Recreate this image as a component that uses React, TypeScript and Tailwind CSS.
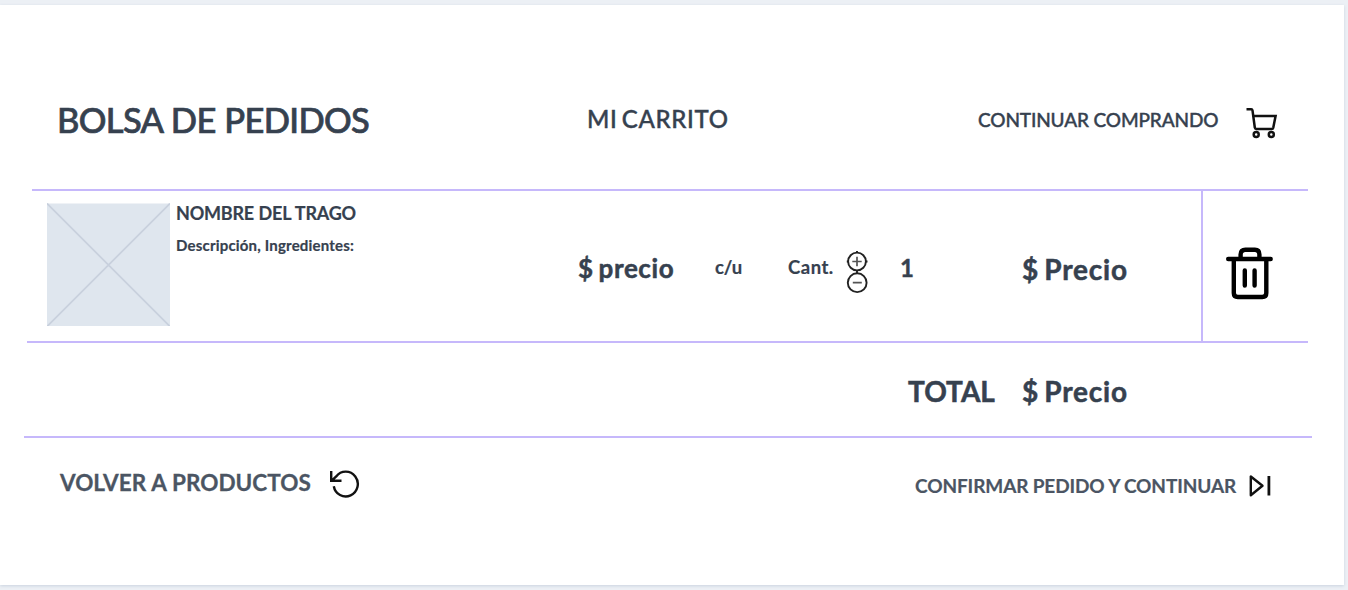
import type { ReactNode } from "react";

function CartIcon() {
  return (
    <svg className="block h-8 w-8 shrink-0" viewBox="0 0 32 32" fill="none" stroke="#111" strokeWidth="2.5">
      <path d="M0.5 2.3H5.2Q6.3 2.3 6.5 3.4L8.8 20.5Q9 21.9 10.3 21.9H25.6Q27 21.9 27.3 20.6L29.6 8.9H7.3" />
      <circle cx="10.2" cy="27.5" r="2.5" />
      <circle cx="25.3" cy="27.5" r="2.5" />
    </svg>
  );
}

function TrashIcon() {
  return (
    <svg className="block h-[54px] w-12 shrink-0" viewBox="0 0 48 54" fill="none" stroke="#000" strokeWidth="4.4" strokeLinecap="round" strokeLinejoin="round">
      <path d="M3.2 13H45.7M15.6 12V8.5Q15.6 3.7 20.4 3.7H29.9Q34.4 3.7 34.4 8.5V12" />
      <path d="M8.8 14V47Q8.8 51 12.8 51H37.3Q41.3 51 41.3 47V14M19.8 24.5V39.5M29.6 24.5V39.5" />
    </svg>
  );
}

function StepperIcons() {
  return (
    <svg className="block h-[44px] w-[22px] shrink-0" viewBox="0 0 22 44" fill="none" stroke="#222" strokeWidth="1.9">
      <circle cx="11" cy="11.5" r="8.9" />
      <circle cx="11.2" cy="32.7" r="9.4" />
      <path d="M6.3 11.5H15.7M11 6.8V16.2M6.8 32.7H15.8" stroke="#555" strokeWidth="1.7" />
      <path d="M11 1V3M11 20V23M0.8 11.5H2.5M19.5 11.5H21.5" />
    </svg>
  );
}

function BackIcon() {
  return (
    <svg className="block h-[30px] w-[30px] shrink-0" viewBox="0 0 30 30" fill="none" stroke="#111" strokeWidth="2.4">
      <path d="M3.8 17.2A12.1 12.4 0 1 0 6.2 7.4L2 11.4M1.2 2V11.8H11.5" />
    </svg>
  );
}

function NextIcon() {
  return (
    <svg className="block h-6 w-6 shrink-0" viewBox="0 0 24 24" fill="none" stroke="#111" strokeLinejoin="round">
      <path d="M2.8 2.5V21.2L14.5 11.8Z" strokeWidth="2.4" />
      <path d="M20.9 2V21.5" strokeWidth="2.8" />
    </svg>
  );
}

function Placeholder() {
  return (
    <svg className="mt-[12px] ml-[15px] block h-[123px] w-[123px] shrink-0" viewBox="0 0 123 123" stroke="#c8d0dd" strokeWidth="1.8">
      <rect y="0.5" width="123" height="123" fill="#dfe6ee" stroke="none" />
      <path d="M0 0.5L123 123.5M123 0.5L0 123.5" />
    </svg>
  );
}

function Label({ className, children }: { className: string; children: ReactNode }) {
  return <span className={`block shrink-0 whitespace-nowrap leading-none ${className}`}>{children}</span>;
}

export default function App() {
  return (
    <div className="h-[590px] w-[1348px] overflow-hidden bg-[#ecf0f5] pt-[5px] font-['Lato',sans-serif] text-[#36414f]">
      <main className="flex h-[580px] w-[1344px] flex-col bg-white shadow-[0_1px_3px_#cbd3df]">
        <header className="flex h-[184px] shrink-0 items-start pl-[57px]">
          <Label className="mt-[98px] w-[530px] text-[34.5px] font-medium tracking-[-0.65px] [word-spacing:0.5px] [-webkit-text-stroke:0.7px_#36414f]">BOLSA DE PEDIDOS</Label>
          <Label className="mt-[102px] w-[391px] text-[24px] font-medium tracking-[0.65px] [word-spacing:-2.4px] [-webkit-text-stroke:0.4px_#36414f]">MI CARRITO</Label>
          <Label className="mt-[105px] w-[267px] text-[19px] font-medium tracking-[-0.13px] [word-spacing:0px] [-webkit-text-stroke:0.4px_#36414f]">CONTINUAR COMPRANDO</Label>
          <div className="mt-[102px] pl-[0.5px]"><CartIcon /></div>
        </header>

        <div className="ml-8 h-[2px] w-[1276px] shrink-0 bg-[#c6b8fb]" />
        <section className="ml-8 flex h-[150px] w-[1276px] shrink-0 items-start">
          <Placeholder />
          <div className="ml-[6px] flex w-[402px] flex-col">
            <Label className="mt-[13px] text-[18px] font-bold tracking-[-0.2px] [word-spacing:0.4px] [-webkit-text-stroke:0.2px_#36414f]">NOMBRE DEL TRAGO</Label>
            <Label className="mt-[16px] text-[15px] font-bold tracking-[0.19px] [-webkit-text-stroke:0.2px_#36414f]">Descripción, Ingredientes:</Label>
          </div>
          <Label className="mt-[64px] w-[137px] text-[26px] font-bold tracking-[0.6px] [word-spacing:-2px] [-webkit-text-stroke:0.5px_#36414f]">$ precio</Label>
          <Label className="mt-[67px] w-[73px] text-[18.5px] font-bold tracking-[-0.2px] [-webkit-text-stroke:0.2px_#36414f]">c/u</Label>
          <Label className="mt-[67px] w-[58px] text-[18.5px] font-bold tracking-[0.5px] [-webkit-text-stroke:0.2px_#36414f]">Cant.</Label>
          <div className="mt-[59px] w-[54px]"><StepperIcons /></div>
          <Label className="mt-[65px] w-[122px] text-[24px] font-bold [-webkit-text-stroke:0.4px_#36414f]">1</Label>
          <Label className="mt-[64px] w-[179px] text-[28px] font-bold tracking-[0.8px] [word-spacing:-2.4px] [-webkit-text-stroke:0.5px_#36414f]">$ Precio</Label>
          <div className="h-full w-[107px] border-l-2 border-[#c6b8fb] pt-[55px] pl-[22px]"><TrashIcon /></div>
        </section>

        <div className="ml-[27px] h-[2px] w-[1281px] shrink-0 bg-[#c6b8fb]" />
        <section className="flex h-[93px] shrink-0 items-start pl-[908px]">
          <Label className="mt-[34px] w-[114px] text-[28px] font-bold [-webkit-text-stroke:0.5px_#36414f]">TOTAL</Label>
          <Label className="mt-[34px] text-[28px] font-bold tracking-[0.8px] [word-spacing:-2.4px] [-webkit-text-stroke:0.5px_#36414f]">$ Precio</Label>
        </section>

        <div className="ml-6 h-[2px] w-[1288px] shrink-0 bg-[#c6b8fb]" />
        <footer className="flex items-start pl-[60px] text-[#4b5563]">
          <Label className="mt-[34px] w-[269.5px] text-[22.5px] font-bold tracking-[0.03px] [word-spacing:0.3px] [-webkit-text-stroke:0.3px_#4b5563]">VOLVER A PRODUCTOS</Label>
          <div className="mt-[31px] w-[585.5px]"><BackIcon /></div>
          <Label className="mt-[38px] w-[333px] text-[19px] font-bold tracking-[-0.1px] [word-spacing:-0.2px] [-webkit-text-stroke:0.2px_#4b5563]">CONFIRMAR PEDIDO Y CONTINUAR</Label>
          <div className="mt-[36px]"><NextIcon /></div>
        </footer>
      </main>
    </div>
  );
}
